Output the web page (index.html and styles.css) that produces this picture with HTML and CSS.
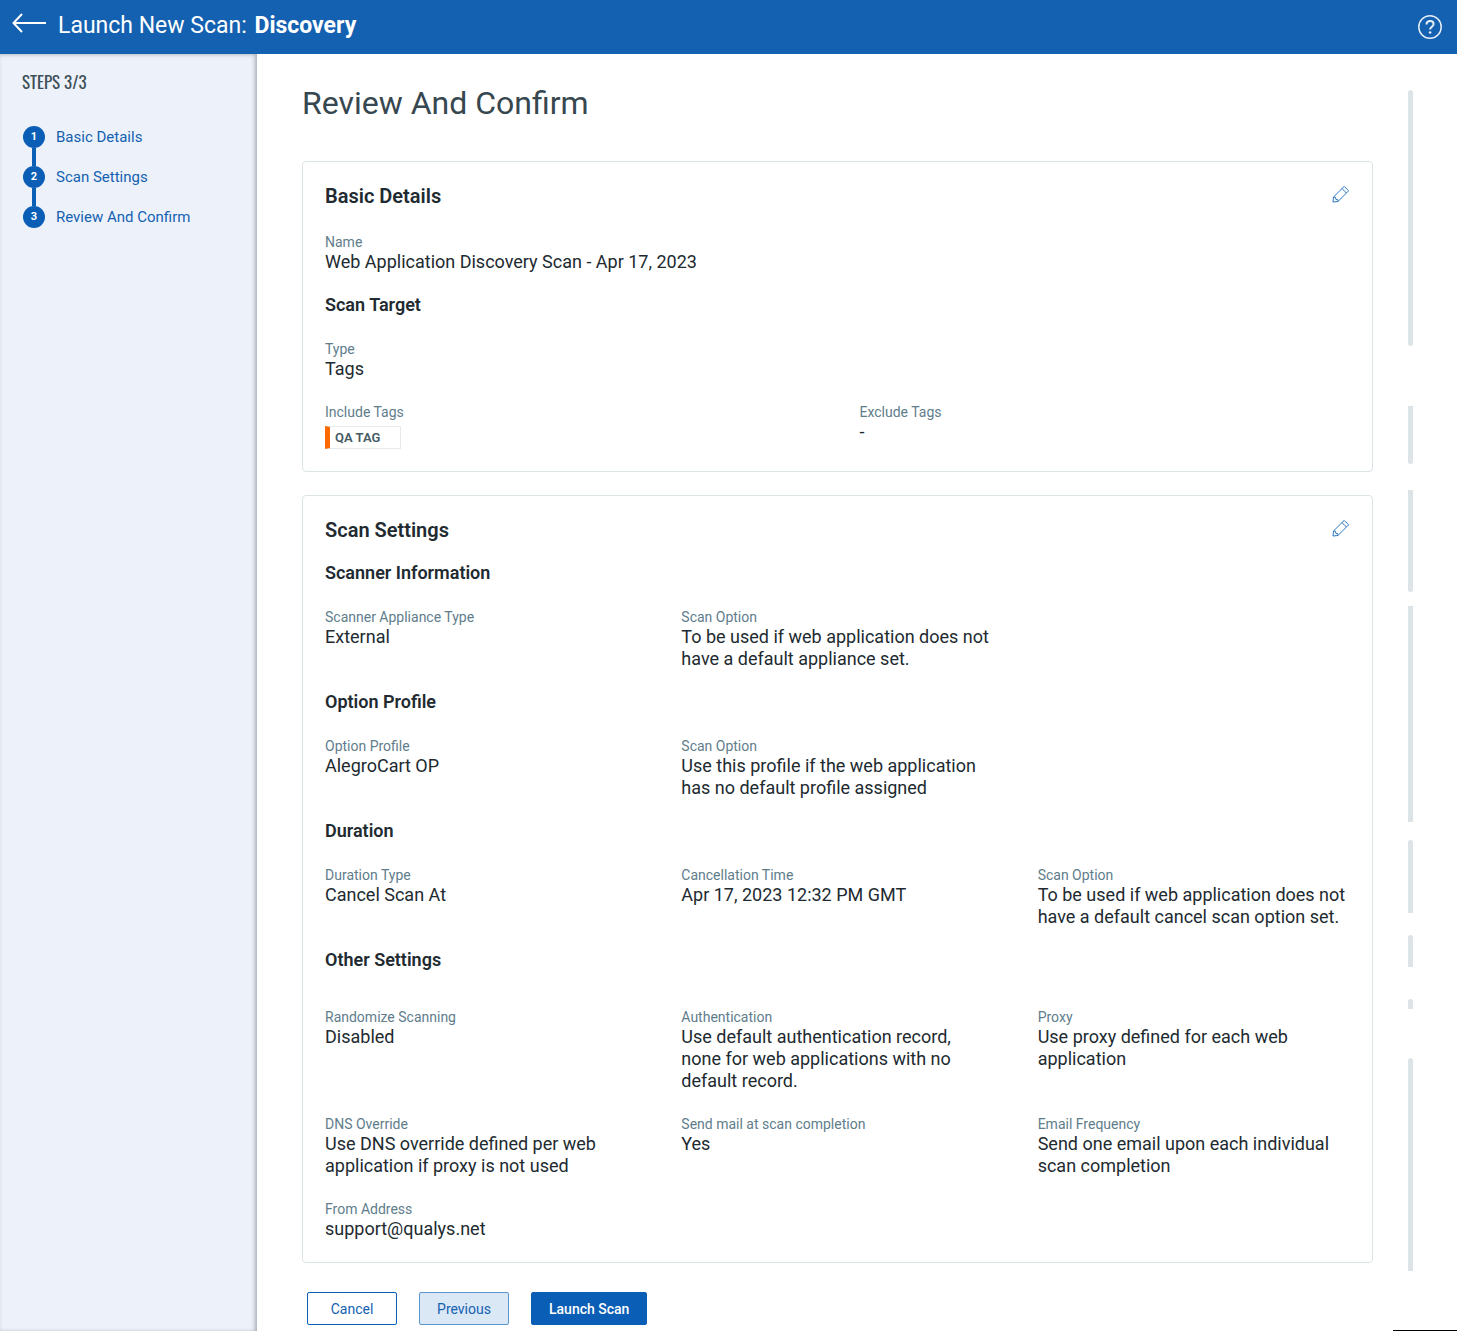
FILE: index.html
```html
<!DOCTYPE html>
<html lang="en">
<head>
    <meta charset="UTF-8">
    <meta name="viewport" content="width=device-width, initial-scale=1.0">
    <title>Launch New Scan: Discovery</title>
    <link rel="stylesheet" href="styles.css">
</head>
<body>
    <header class="topbar">
        <a class="back" href="#" aria-label="Back">
            <svg width="34" height="20" viewBox="0 0 34 20" fill="none" stroke="currentColor" stroke-width="2">
                <path d="M10 1L1.5 10l8.500 9M1.500 10H34"/>
            </svg>
        </a>
        <h1 class="topbar-title">Launch New Scan: <strong>Discovery</strong></h1>
        <a class="help" href="#" aria-label="Help">
            <svg width="26" height="26" viewBox="0 0 26 26" fill="none" stroke="currentColor">
                <circle cx="13" cy="13" r="11.200" stroke-width="1.500"/>
                <path d="M9.500 10.500c0-2.200 1.400-3.500 3.600-3.500 2.100 0 3.500 1.200 3.500 3 0 2.700-3.500 2.700-3.500 5.600" stroke-width="2"/>
                <circle cx="13.100" cy="18.500" r="1.300" fill="currentColor" stroke="none"/>
            </svg>
        </a>
    </header>

    <div class="layout">
        <nav class="sidebar">
            <h2 class="steps-title">STEPS 3/3</h2>
            <ol class="steps">
                <li><a class="step" href="#basic"><span class="step-number">1</span>Basic Details</a></li>
                <li><a class="step" href="#settings"><span class="step-number">2</span>Scan Settings</a></li>
                <li><a class="step" href="#review"><span class="step-number">3</span>Review And Confirm</a></li>
            </ol>
        </nav>

        <main class="content" id="review">
            <h2 class="page-title">Review And Confirm</h2>

            <section class="card" id="basic">
                <div class="card-header">
                    <h3 class="card-title">Basic Details</h3>
                    <button class="edit" type="button" aria-label="Edit basic details">
                        <svg width="18" height="18" viewBox="0 0 18 18" fill="none" stroke="currentColor">
                            <path d="M1 17l.5-5L12.200 1.400l4.400 4.400L6 16.500zM1.500 12l2 .300.300 2 2 .3.200 1.900M10 3.600L14.400 8"/>
                        </svg>
                    </button>
                </div>
                <dl class="fields one">
                    <div class="field"><dt>Name</dt><dd>Web Application Discovery Scan - Apr 17, 2023</dd></div>
                </dl>
                <h4 class="group-title">Scan Target</h4>
                <dl class="fields two">
                    <div class="field wide"><dt>Type</dt><dd>Tags</dd></div>
                    <div class="field"><dt>Include Tags</dt><dd class="tag">QA TAG</dd></div>
                    <div class="field"><dt>Exclude Tags</dt><dd>-</dd></div>
                </dl>
            </section>

            <section class="card" id="settings">
                <div class="card-header compact">
                    <h3 class="card-title">Scan Settings</h3>
                    <button class="edit" type="button" aria-label="Edit scan settings">
                        <svg width="18" height="18" viewBox="0 0 18 18" fill="none" stroke="currentColor">
                            <path d="M1 17l.5-5L12.200 1.400l4.400 4.400L6 16.500zM1.500 12l2 .300.300 2 2 .3.200 1.900M10 3.600L14.400 8"/>
                        </svg>
                    </button>
                </div>
                <h4 class="group-title first">Scanner Information</h4>
                <dl class="fields">
                    <div class="field"><dt>Scanner Appliance Type</dt><dd>External</dd></div>
                    <div class="field"><dt>Scan Option</dt><dd>To be used if web application does not have a default appliance set.</dd></div>
                </dl>
                <h4 class="group-title">Option Profile</h4>
                <dl class="fields">
                    <div class="field"><dt>Option Profile</dt><dd>AlegroCart OP</dd></div>
                    <div class="field"><dt>Scan Option</dt><dd>Use this profile if the web application has no default profile assigned</dd></div>
                </dl>
                <h4 class="group-title">Duration</h4>
                <dl class="fields">
                    <div class="field"><dt>Duration Type</dt><dd>Cancel Scan At</dd></div>
                    <div class="field"><dt>Cancellation Time</dt><dd>Apr 17, 2023 12:32 PM GMT</dd></div>
                    <div class="field"><dt>Scan Option</dt><dd>To be used if web application does not have a default cancel scan option set.</dd></div>
                </dl>
                <h4 class="group-title spaced">Other Settings</h4>
                <dl class="fields">
                    <div class="field"><dt>Randomize Scanning</dt><dd>Disabled</dd></div>
                    <div class="field"><dt>Authentication</dt><dd>Use default authentication record, none for web applications with no default record.</dd></div>
                    <div class="field"><dt>Proxy</dt><dd>Use proxy defined for each web application</dd></div>
                    <div class="field"><dt>DNS Override</dt><dd>Use DNS override defined per web application if proxy is not used</dd></div>
                    <div class="field"><dt>Send mail at scan completion</dt><dd>Yes</dd></div>
                    <div class="field"><dt>Email Frequency</dt><dd>Send one email upon each individual scan completion</dd></div>
                    <div class="field"><dt>From Address</dt><dd>support@qualys.net</dd></div>
                </dl>
            </section>

            <div class="actions">
                <button class="btn" type="button">Cancel</button>
                <button class="btn btn-secondary" type="button">Previous</button>
                <button class="btn btn-primary" type="button">Launch Scan</button>
            </div>
        </main>

        <div class="rail" aria-hidden="true">
            <span class="bar round-top round-bottom s1"></span>
            <span class="bar round-bottom s2"></span>
            <span class="bar round-bottom s3"></span>
            <span class="bar s4"></span>
            <span class="bar round-top s5"></span>
            <span class="bar round-top s6"></span>
            <span class="bar round-top s7"></span>
            <span class="bar round-top s8"></span>
        </div>
    </div>
    <div class="corner-line"></div>
</body>
</html>
```
FILE: styles.css
```css
* {
    box-sizing: border-box;
}
body {
    margin: 0;
    min-height: 100vh;
    display: flex;
    flex-direction: column;
    position: relative;
    font-family: Roboto, "Liberation Sans", sans-serif;
    color: #212a30;
    background: #fff;
}
h1, h2, h3, h4, dl, dd, ol {
    margin: 0;
    padding: 0;
}
svg {
    display: block;
}
a {
    text-decoration: none;
}

/* header */
.topbar {
    display: flex;
    align-items: center;
    height: 54px;
    padding: 0 14px 0 12px;
    background: #1461b1;
    color: #fff;
}
.back {
    color: #fff;
    padding-bottom: 8px;
}
.topbar-title {
    flex: 1;
    margin-left: 12px;
    padding-bottom: 2px;
    font-size: 23px;
    line-height: 28px;
    font-weight: 400;
}
.topbar-title strong {
    margin-left: 2px;
    font-weight: 700;
}
.help {
    color: #e6eef7;
}

.layout {
    flex: 1;
    display: flex;
}

/* steps */
.sidebar {
    flex: 0 0 257px;
    padding: 18px 22px;
    background: #edf2fa;
    box-shadow: inset -3px 0 4px -1px #a9b0b8, inset 0 2px 5px -2px #b9c2cc;
}
.steps-title {
    font-family: Oswald, "Roboto Condensed", "Liberation Sans Narrow", "Liberation Sans", sans-serif;
    font-size: 17px;
    line-height: 20px;
    font-weight: 400;
    color: #3d4e57;
}
.steps {
    margin-top: 34px;
    padding-left: 1px;
    list-style: none;
}
.step {
    display: flex;
    align-items: center;
    gap: 11px;
    font-size: 15px;
    line-height: 22px;
    color: #1461b1;
}
.steps li + li::before {
    content: "";
    display: block;
    width: 4px;
    height: 18px;
    margin-left: 9px;
    background: #0a5eb5;
}
.step-number {
    width: 22px;
    height: 22px;
    border-radius: 50%;
    background: #0a5eb5;
    color: #fff;
    font-size: 11px;
    font-weight: 700;
    text-align: center;
}

/* review */
.content {
    flex: 1;
    padding: 29px 35px 6px 45px;
}
.page-title {
    font-size: 32px;
    line-height: 40px;
    font-weight: 400;
    color: #37474f;
}
.card {
    margin-top: 23px;
    padding: 20px 0 22px;
    border: 1px solid #dce4e8;
    border-radius: 4px;
}
.page-title + .card {
    margin-top: 38px;
}
.card-header {
    display: flex;
    justify-content: space-between;
    align-items: center;
    padding: 0 22px;
    margin-bottom: 24px;
}
.card-header.compact {
    margin-bottom: 19px;
}
.card-title {
    font-size: 20px;
    line-height: 28px;
    font-weight: 600;
}
.edit {
    padding: 0 0 4px;
    border: none;
    background: none;
    color: #2f78c4;
    cursor: pointer;
}
.group-title {
    margin: 22px 22px 26px;
    font-size: 18px;
    line-height: 20px;
    font-weight: 600;
}
.group-title.first {
    margin-top: 0;
}
.group-title.spaced {
    margin-bottom: 39px;
}
.fields {
    display: grid;
    grid-template-columns: repeat(3, 1fr);
    row-gap: 24px;
}
.fields.two {
    grid-template-columns: repeat(2, 1fr);
}
.fields.one {
    grid-template-columns: 1fr;
}
.field {
    padding: 0 22px;
}
.field.wide {
    grid-column: 1 / -1;
}
.field dt {
    font-size: 14px;
    line-height: 17px;
    color: #607d8b;
}
.field dd {
    font-size: 18px;
    line-height: 22px;
}
.field .tag {
    width: 76px;
    margin-top: 5px;
    padding-left: 5px;
    border: 1px solid #e4eaed;
    border-left: 5px solid #ff6a00;
    font-size: 13px;
    line-height: 21px;
    font-weight: 600;
    color: #455a64;
}

/* buttons */
.actions {
    display: flex;
    gap: 22px;
    margin: 29px 0 0 5px;
}
.btn {
    min-width: 90px;
    height: 33px;
    padding: 0 17px;
    border: 1px solid #0a5eb5;
    border-radius: 2px;
    background: #fff;
    color: #1461b1;
    font-family: inherit;
    font-size: 14px;
    cursor: pointer;
}
.btn-secondary {
    border-color: #5a97d2;
    background: #dae7f5;
}
.btn-primary {
    background: #0a5eb5;
    color: #fff;
    font-weight: 500;
}

/* section markers on the right */
.rail {
    flex: 0 0 49px;
    display: flex;
    flex-direction: column;
    padding: 36px 0 60px;
}
.bar {
    width: 5px;
    background: #dce4e8;
}
.round-top {
    border-top-left-radius: 3px;
    border-top-right-radius: 3px;
}
.round-bottom {
    border-bottom-left-radius: 3px;
    border-bottom-right-radius: 3px;
}
.s1 { flex: 256; margin-bottom: 60px; }
.s2 { flex: 58; margin-bottom: 26px; }
.s3 { flex: 102; margin-bottom: 14px; }
.s4 { flex: 216; margin-bottom: 18px; }
.s5 { flex: 73; margin-bottom: 22px; }
.s6 { flex: 32; margin-bottom: 32px; }
.s7 { flex: 10; margin-bottom: 49px; }
.s8 { flex: 213; }

.corner-line {
    position: absolute;
    right: 0;
    bottom: 0;
    width: 64px;
    height: 1px;
    background: #000;
}
```
